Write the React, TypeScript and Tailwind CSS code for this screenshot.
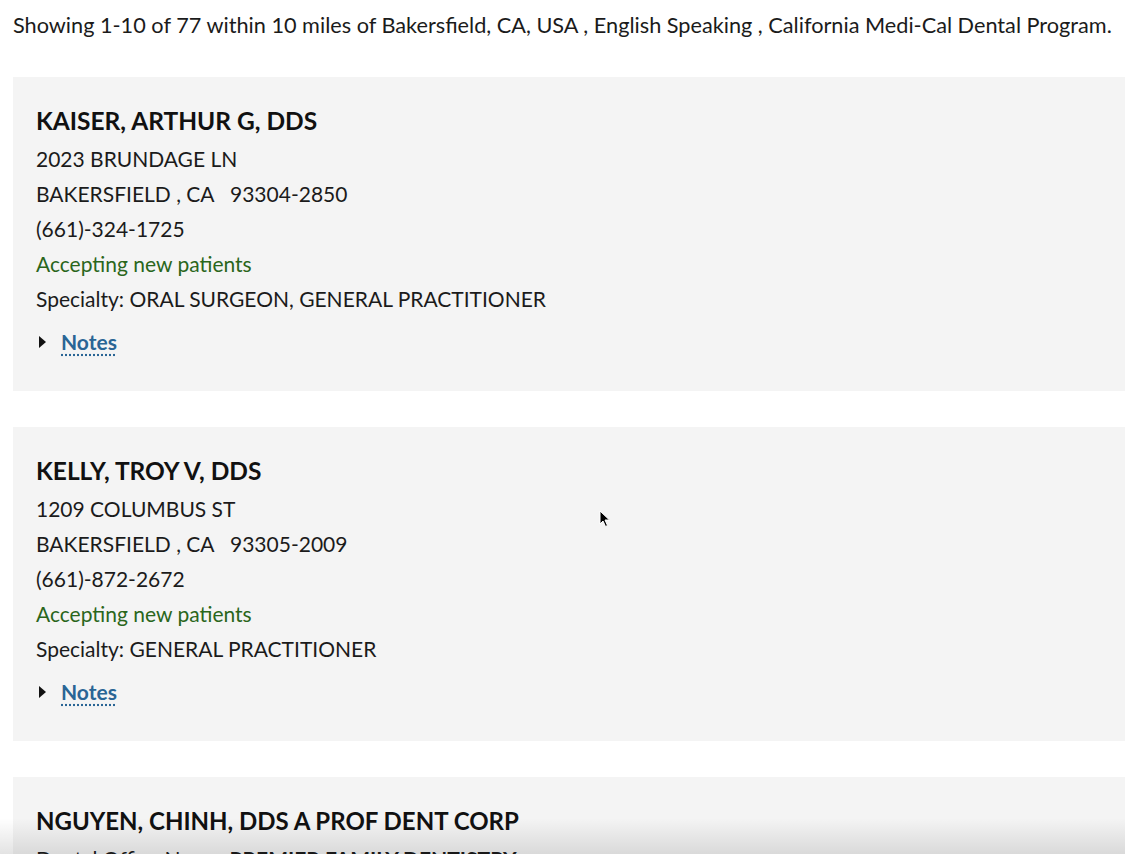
import React from "react";

type Provider = {
  name: string;
  street: string;
  city: string;
  phone: string;
  specialty: string;
};

const providers: Provider[] = [
  {
    name: "KAISER, ARTHUR G, DDS",
    street: "2023 BRUNDAGE LN",
    city: "BAKERSFIELD , CA\u00a0\u00a0 93304-2850",
    phone: "(661)-324-1725",
    specialty: "Specialty: ORAL SURGEON, GENERAL PRACTITIONER",
  },
  {
    name: "KELLY, TROY V, DDS",
    street: "1209 COLUMBUS ST",
    city: "BAKERSFIELD , CA\u00a0\u00a0 93305-2009",
    phone: "(661)-872-2672",
    specialty: "Specialty: GENERAL PRACTITIONER",
  },
];

function Card({ p }: { p: Provider }) {
  return (
    <div className="bg-[#f4f4f4] pl-[23px] pt-[24px] pb-[32px] mb-[36px]">
      <div className="text-[24.5px] leading-[40px] font-bold text-[#111]">{p.name}</div>
      <div className="text-[21px] leading-[35px] text-[#1b1b1b]">
        <div>{p.street}</div>
        <div>{p.city}</div>
        <div>{p.phone}</div>
        <div className="text-[#2a661b]">Accepting new patients</div>
        <div>{p.specialty}</div>
      </div>
      <div className="mt-[8px] flex items-center text-[21px] leading-[35px]">
        <svg width="8" height="12" viewBox="0 0 8 12" className="ml-[3px] mr-[14px]">
          <polygon points="0,0 7,6 0,12" fill="#111" />
        </svg>
        <span className="font-bold text-[#2a6595] underline decoration-dotted decoration-[#2a6595] underline-offset-[4px]">
          Notes
        </span>
      </div>
    </div>
  );
}

export default function App() {
  return (
    <div
      className="relative h-[854px] w-[1125px] overflow-hidden bg-white"
      style={{ fontFamily: "Lato, 'Open Sans', sans-serif" }}
    >
      <div className="whitespace-nowrap pl-[13px] pt-[8px] text-[21.7px] leading-[35px] text-[#1b1b1b]">
        Showing 1-10 of 77 within 10 miles of Bakersfield, CA, USA , English Speaking , California Medi-Cal Dental Program.
      </div>
      <div className="ml-[13px] mt-[34px]">
        {providers.map((p) => (
          <Card key={p.name} p={p} />
        ))}
        <div className="bg-[#f4f4f4] pl-[23px] pt-[24px] pb-[32px]">
          <div className="text-[24px] leading-[40px] font-bold text-[#111]">
            NGUYEN, CHINH, DDS A PROF DENT CORP
          </div>
          <div className="text-[21px] leading-[35px] text-[#1b1b1b]">
            Dental Office Name: <span className="font-bold">PREMIER FAMILY DENTISTRY</span>
          </div>
        </div>
      </div>
      <svg
        className="absolute left-[599px] top-[510px]"
        width="12"
        height="18"
        viewBox="0 0 12 18"
      >
        <path d="M1 1 L1 14 L4 11 L6.5 16.5 L8.5 15.5 L6 10 L10.5 10 Z" fill="#000" stroke="#fff" strokeWidth="1" />
      </svg>
      <div className="pointer-events-none absolute bottom-0 left-0 h-[36px] w-full bg-gradient-to-b from-transparent to-[rgba(0,0,0,0.11)]" />
    </div>
  );
}
